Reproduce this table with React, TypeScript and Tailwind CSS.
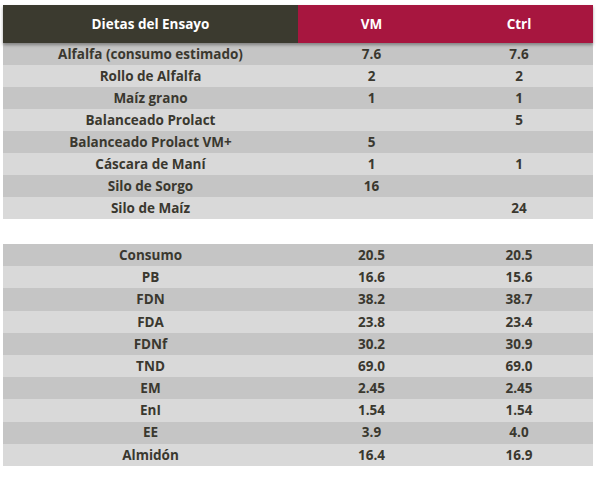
const dietas: [string, string, string][] = [
  ["Alfalfa (consumo estimado)", "7.6", "7.6"],
  ["Rollo de Alfalfa", "2", "2"],
  ["Maíz grano", "1", "1"],
  ["Balanceado Prolact", "", "5"],
  ["Balanceado Prolact VM+", "5", ""],
  ["Cáscara de Maní", "1", "1"],
  ["Silo de Sorgo", "16", ""],
  ["Silo de Maíz", "", "24"],
];

const nutrientes: [string, string, string][] = [
  ["Consumo", "20.5", "20.5"],
  ["PB", "16.6", "15.6"],
  ["FDN", "38.2", "38.7"],
  ["FDA", "23.8", "23.4"],
  ["FDNf", "30.2", "30.9"],
  ["TND", "69.0", "69.0"],
  ["EM", "2.45", "2.45"],
  ["EnI", "1.54", "1.54"],
  ["EE", "3.9", "4.0"],
  ["Almidón", "16.4", "16.9"],
];

const Rows = ({ rows, tall }: { rows: [string, string, string][]; tall?: boolean }) => (
  <div className="flex flex-col">
    {rows.map(([name, vm, ctrl], i) => (
      <div
        key={name}
        className={`grid grid-cols-[295px_147px_148px] items-center text-center ${
          tall ? "h-[22.2px]" : "h-[22px]"
        } ${i % 2 === 0 ? "bg-[#c5c5c5]" : "bg-[#d9d9d9]"}`}
      >
        <span>{name}</span>
        <span>{vm}</span>
        <span>{ctrl}</span>
      </div>
    ))}
  </div>
);

export default function App() {
  return (
    <div
      className="w-[600px] h-[479px] bg-white pt-[5px] pl-[3px] text-[13.5px] font-bold text-[#3a382f]"
      style={{ fontFamily: '"Open Sans", "DejaVu Sans", sans-serif' }}
    >
      <div className="w-[590px]">
        <div className="grid grid-cols-[295px_295px] h-[38px] items-center text-center text-white text-[13.5px] shadow-[0_2px_3px_rgba(0,0,0,0.35)] relative">
          <div className="h-full flex items-center justify-center bg-[#3b3a2f]">Dietas del Ensayo</div>
          <div className="h-full grid grid-cols-[147px_148px] items-center bg-[#a7163f]">
            <span>VM</span>
            <span>Ctrl</span>
          </div>
        </div>
        <Rows rows={dietas} />
        <div className="h-[25px]" />
        <Rows rows={nutrientes} tall />
      </div>
    </div>
  );
}
